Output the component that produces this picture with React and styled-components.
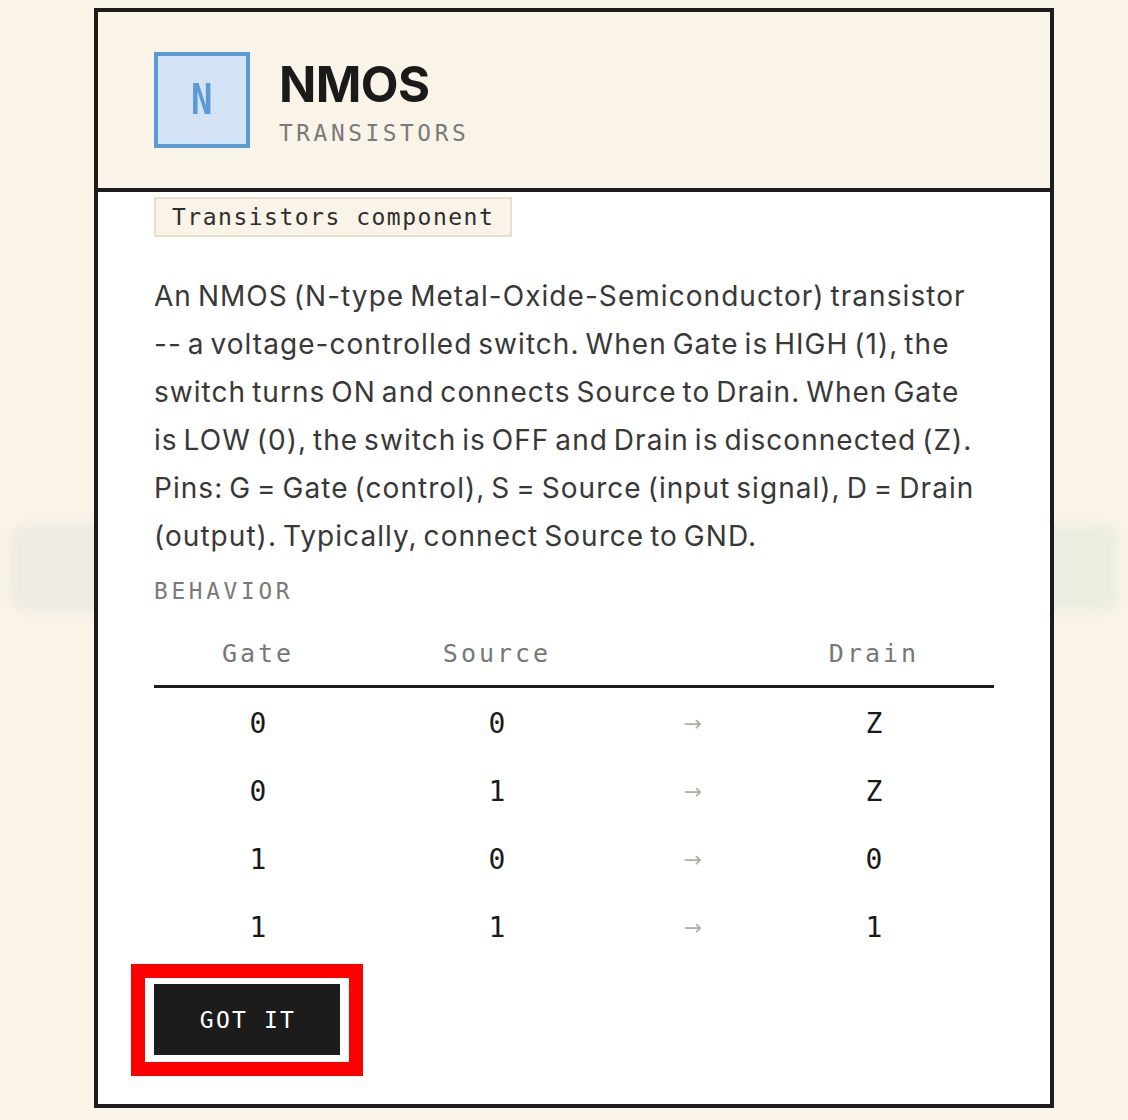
import React from "react";
import styled, { createGlobalStyle } from "styled-components";

const Global = createGlobalStyle`
  html, body { margin: 0; padding: 0; }
  body {
    background: #faf3e8;
    font-family: Inter, "Noto Sans", sans-serif;
    -webkit-font-smoothing: antialiased;
  }
`;

const MONO = `"DejaVu Sans Mono", "Liberation Mono", monospace`;

const Page = styled.div`
  position: relative;
  width: 1128px;
  height: 1120px;
  overflow: hidden;
  background: #faf3e8;
`;

const PageBehind = styled.div`
  padding: 524px 10px 0;
  display: flex;
  filter: blur(5px);
  opacity: 0.9;
`;

const BandLeft = styled.div`
  flex: 1;
  height: 88px;
  border-radius: 18px 0 0 18px;
  background: #edebe4;
`;

const BandRight = styled.div`
  flex: 1;
  height: 88px;
  border-radius: 0 18px 18px 0;
  background: #e9eee0;
`;

const Overlay = styled.div`
  position: absolute;
  inset: 0;
  display: flex;
  justify-content: flex-start;
  align-items: flex-start;
  padding: 8px 0 0 94px;
`;

const Card = styled.div`
  width: 960px;
  height: 1100px;
  box-sizing: border-box;
  border: 4px solid #1c1c1c;
  background: #ffffff;
  display: flex;
  flex-direction: column;
`;

const Header = styled.header`
  background: #faf3e8;
  border-bottom: 4px solid #1c1c1c;
  padding: 40px 56px;
  display: flex;
  align-items: flex-start;
  gap: 29px;
`;

const IconBox = styled.div`
  width: 96px;
  height: 96px;
  flex: none;
  box-sizing: border-box;
  border: 4px solid #5b9bd5;
  background: #d3e3f5;
  display: flex;
  align-items: center;
  justify-content: center;
`;

const IconLetter = styled.span`
  display: inline-block;
  font-family: ${MONO};
  font-weight: 700;
  font-size: 42px;
  line-height: 1;
  color: #5b9bd5;
  transform: scaleX(0.85);
`;

const TitleBlock = styled.div`
  margin-top: 6px;
  display: flex;
  flex-direction: column;
`;

const Title = styled.h1`
  margin: 0;
  font-family: Inter, sans-serif;
  font-weight: 700;
  font-size: 49px;
  line-height: 54px;
  letter-spacing: -0.6px;
  color: #1a1a1a;
`;

const Category = styled.div`
  margin-top: 8px;
  font-family: ${MONO};
  font-size: 22.75px;
  line-height: 27px;
  letter-spacing: 3.6px;
  color: #7a7a7a;
`;

const Body = styled.div`
  padding: 5px 56px 48px;
  display: flex;
  flex-direction: column;
  align-items: flex-start;
`;

const Tag = styled.span`
  height: 40px;
  box-sizing: border-box;
  border: 2px solid #e9dec8;
  background: #faf3e8;
  padding: 0 16px;
  display: inline-flex;
  align-items: center;
  font-family: ${MONO};
  font-size: 23px;
  letter-spacing: 1.5px;
  color: #2e2e2e;
`;

const Description = styled.p`
  margin: 35px 0 0;
  font-family: Inter, sans-serif;
  font-size: 28px;
  line-height: 48px;
  letter-spacing: 1.05px;
  word-spacing: -3px;
  color: #383838;
  width: 840px;
  white-space: nowrap;
`;

const SectionLabel = styled.div`
  margin-top: 18px;
  font-family: ${MONO};
  font-size: 22.75px;
  line-height: 27px;
  letter-spacing: 3.7px;
  color: #7a7a7a;
`;

const Table = styled.div`
  margin-top: 18px;
  width: 840px;
  display: grid;
  grid-template-columns: 208px 270px 122px 1fr;
`;

const HeadCell = styled.div`
  padding: 16px 0 16px;
  border-bottom: 3px solid #1c1c1c;
  text-align: center;
  font-family: ${MONO};
  font-weight: 500;
  font-size: 25px;
  line-height: 30px;
  letter-spacing: 3px;
  color: #777777;
`;

const Cell = styled.div`
  height: 64px;
  padding-top: 4px;
  line-height: 64px;
  text-align: center;
  font-family: ${MONO};
  font-size: 28px;
  color: #1a1a1a;
`;

const ArrowCell = styled(Cell)`
  font-family: "DejaVu Sans", sans-serif;
  font-size: 22px;
  color: #b3afa7;
`;

const Highlight = styled.span`
  margin: 4px -23px -21px -23px;
  border: 14px solid #ff0000;
  padding: 6px 9px 7px 9px;
  display: inline-flex;
  background: #ffffff;
`;

const Button = styled.button`
  height: 71px;
  width: 186px;
  border: none;
  background: #1c1c1c;
  color: #ffffff;
  font-family: ${MONO};
  font-size: 23px;
  letter-spacing: 2.2px;
  padding: 0 0 0 2px;
  cursor: pointer;
`;

const rows = [
  ["0", "0", "Z"],
  ["0", "1", "Z"],
  ["1", "0", "0"],
  ["1", "1", "1"],
];

const lines = [
  "An NMOS (N-type Metal-Oxide-Semiconductor) transistor",
  "-- a voltage-controlled switch. When Gate is HIGH (1), the",
  "switch turns ON and connects Source to Drain. When Gate",
  "is LOW (0), the switch is OFF and Drain is disconnected (Z).",
  "Pins: G = Gate (control), S = Source (input signal), D = Drain",
  "(output). Typically, connect Source to GND.",
];

export default function App() {
  return (
    <Page>
      <Global />
      <PageBehind>
        <BandLeft />
        <BandRight />
      </PageBehind>
      <Overlay>
        <Card>
          <Header>
            <IconBox>
              <IconLetter>N</IconLetter>
            </IconBox>
            <TitleBlock>
              <Title>NMOS</Title>
              <Category>TRANSISTORS</Category>
            </TitleBlock>
          </Header>
          <Body>
            <Tag>Transistors component</Tag>
            <Description>
              {lines.map((l, i) => (
                <React.Fragment key={i}>
                  {l}
                  {i < lines.length - 1 && <br />}
                </React.Fragment>
              ))}
            </Description>
            <SectionLabel>BEHAVIOR</SectionLabel>
            <Table>
              <HeadCell>Gate</HeadCell>
              <HeadCell>Source</HeadCell>
              <HeadCell />
              <HeadCell>Drain</HeadCell>
              {rows.map((r, i) => (
                <React.Fragment key={i}>
                  <Cell>{r[0]}</Cell>
                  <Cell>{r[1]}</Cell>
                  <ArrowCell>→</ArrowCell>
                  <Cell>{r[2]}</Cell>
                </React.Fragment>
              ))}
            </Table>
            <Highlight>
              <Button>GOT IT</Button>
            </Highlight>
          </Body>
        </Card>
      </Overlay>
    </Page>
  );
}
